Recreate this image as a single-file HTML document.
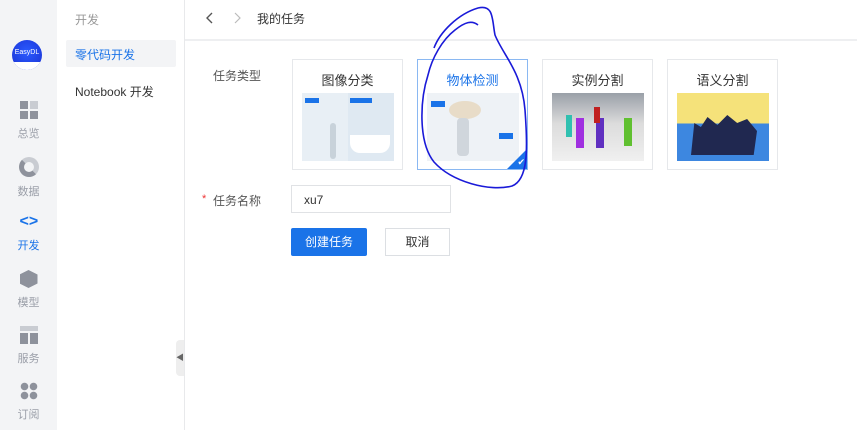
<!DOCTYPE html><html><head><meta charset="utf-8"><style>
body{margin:0;width:857px;height:430px;overflow:hidden;font-family:"Liberation Sans","Noto Sans CJK SC",sans-serif;background:#fff;position:relative;font-size:12px}
.a{position:absolute}
.rail{left:0;top:0;width:57px;height:430px;background:#f3f4f6}
.ri{width:57px;text-align:center;color:#9a9ea8;font-size:11px}
.ico{width:18px;height:18px;margin:0 auto 6px;}
.card{width:111px;height:111px;border:1px solid #e6e8eb;background:#fff;box-sizing:border-box}
.card .t{text-align:center;margin-top:10px;font-size:13px;color:#333}
.card .im{position:absolute;left:9px;top:33px;width:92px;height:68px}
</style></head><body>
<div class="a rail"></div>
<div class="a" style="left:12px;top:40px;width:30px;height:30px;border-radius:50%;background:radial-gradient(circle at 50% 40%,#2a5bff,#1a2fd0);overflow:hidden"><div style="color:#fff;font-size:7px;text-align:center;margin-top:9px">EasyDL</div><div style="position:absolute;bottom:0;width:30px;height:8px;background:#fff"></div></div>
<div class="a ri" style="top:101px"><div class="ico" style="background:linear-gradient(#8e929c,#8e929c) 0 0/8px 8px no-repeat,linear-gradient(#c9ccd2,#c9ccd2) 10px 0/8px 8px no-repeat,linear-gradient(#8e929c,#8e929c) 0 10px/8px 8px no-repeat,linear-gradient(#8e929c,#8e929c) 10px 10px/8px 8px no-repeat"></div>总览</div>
<div class="a ri" style="top:157px"><div class="ico" style="border-radius:50%;border:5px solid #8e929c;width:10px;height:10px;border-top-color:#c9ccd2;border-right-color:#c9ccd2"></div>数据</div>
<div class="a ri" style="top:213px;color:#1a73e8"><div class="ico" style="font-weight:bold;color:#1a73e8;font-size:16px;line-height:18px">&lt;&gt;</div>开发</div>
<div class="a ri" style="top:270px"><div class="ico" style="background:#8e929c;clip-path:polygon(50% 0,100% 25%,100% 75%,50% 100%,0 75%,0 25%)"></div>模型</div>
<div class="a ri" style="top:326px"><div class="ico" style="background:linear-gradient(#c9ccd2,#c9ccd2) 0 0/18px 5px no-repeat,linear-gradient(#8e929c,#8e929c) 0 7px/8px 11px no-repeat,linear-gradient(#8e929c,#8e929c) 10px 7px/8px 11px no-repeat"></div>服务</div>
<div class="a ri" style="top:382px"><div class="ico" style="background:radial-gradient(circle,#8e929c 3.5px,transparent 4px) 0 0/9px 9px"></div>订阅</div>
<div class="a" style="left:75px;top:11px;color:#999;font-size:12px">开发</div>
<div class="a" style="left:66px;top:40px;width:110px;height:27px;background:#f3f4f6;border-radius:2px"></div>
<div class="a" style="left:75px;top:46px;color:#1a73e8;font-size:12px">零代码开发</div>
<div class="a" style="left:75px;top:83px;color:#333;font-size:12px">Notebook 开发</div>
<div class="a" style="left:184px;top:0;width:1px;height:430px;background:#e8e9eb"></div>
<div class="a" style="left:176px;top:340px;width:8px;height:36px;background:#eee;border-radius:4px 0 0 4px;color:#666;font-size:8px;line-height:36px">◀</div>
<div class="a" style="left:185px;top:39px;width:672px;height:2px;background:#eeeff1"></div>
<svg class="a" style="left:203px;top:10px" width="50" height="16"><path d="M9 3 L4 8 L9 13" fill="none" stroke="#555" stroke-width="1.4"/><path d="M32 3 L37 8 L32 13" fill="none" stroke="#bbb" stroke-width="1.2"/></svg>
<div class="a" style="left:257px;top:10px;color:#333;font-size:12px">我的任务</div>
<div class="a" style="left:213px;top:67px;color:#555;font-size:12px">任务类型</div>
<div class="a card" style="left:292px;top:59px"><div class="t">图像分类</div><div class="im" style="background:linear-gradient(90deg,#e8eff5 50%,#dfe9f2 50%)"><div class="a" style="left:3px;top:5px;width:14px;height:5px;background:#1a73e8"></div><div class="a" style="left:48px;top:5px;width:22px;height:5px;background:#1a73e8"></div><div class="a" style="left:28px;top:30px;width:6px;height:36px;background:#c8d2da;border-radius:3px"></div><div class="a" style="left:48px;top:42px;width:40px;height:18px;background:#fff;border-radius:0 0 10px 10px"></div></div></div>
<div class="a card" style="left:417px;top:59px;border-color:#8ab8f2"><div class="t" style="color:#1a73e8">物体检测</div><div class="im" style="background:#eef2f6"><div class="a" style="left:22px;top:8px;width:32px;height:18px;background:#e8dcc8;border-radius:50%"></div><div class="a" style="left:30px;top:25px;width:12px;height:38px;background:#d0d6dc;border-radius:4px"></div><div class="a" style="left:4px;top:8px;width:14px;height:6px;background:#1a73e8"></div><div class="a" style="left:72px;top:40px;width:14px;height:6px;background:#1a73e8"></div></div><div class="a" style="right:0;bottom:0;width:0;height:0;border-left:20px solid transparent;border-bottom:20px solid #1a73e8"></div><div class="a" style="right:2px;bottom:1px;color:#fff;font-size:9px">✔</div></div>
<div class="a card" style="left:542px;top:59px"><div class="t">实例分割</div><div class="im" style="background:linear-gradient(#9aa0a8,#dcdcdc 45%,#f0f0f0)"><div class="a" style="left:24px;top:25px;width:8px;height:30px;background:#a030e0"></div><div class="a" style="left:44px;top:25px;width:8px;height:30px;background:#6030c0"></div><div class="a" style="left:72px;top:25px;width:8px;height:28px;background:#60c030"></div><div class="a" style="left:14px;top:22px;width:6px;height:22px;background:#30c0b0"></div><div class="a" style="left:42px;top:14px;width:6px;height:16px;background:#c02020"></div></div></div>
<div class="a card" style="left:667px;top:59px"><div class="t">语义分割</div><div class="im" style="background:linear-gradient(#f5e27a 45%,#3d87e0 45%)"><div class="a" style="left:14px;top:22px;width:66px;height:40px;background:#202850;clip-path:polygon(0 100%,5% 20%,15% 30%,25% 5%,40% 25%,55% 0,70% 20%,85% 10%,100% 40%,95% 100%)"></div></div></div>
<div class="a" style="left:202px;top:193px;color:#e33;font-size:11px">*</div>
<div class="a" style="left:213px;top:192px;color:#555;font-size:12px">任务名称</div>
<div class="a" style="left:291px;top:185px;width:160px;height:28px;border:1px solid #e0e2e5;box-sizing:border-box;padding:7px 12px;font-size:12px;color:#333">xu7</div>
<div class="a" style="left:291px;top:228px;width:76px;height:28px;background:#1a73e8;color:#fff;text-align:center;line-height:28px;font-size:12px;border-radius:2px">创建任务</div>
<div class="a" style="left:385px;top:228px;width:65px;height:28px;border:1px solid #dcdfe3;box-sizing:border-box;color:#333;text-align:center;line-height:26px;font-size:12px">取消</div>
<svg class="a" style="left:0;top:0" width="857" height="430"><path d="M434 48 C440 32 458 14 478 8 C494 4 492 20 495 35 C503 55 522 72 525 110 C528 150 528 180 512 186 C490 192 452 182 434 162 C418 142 420 100 428 75 C432 58 442 40 455 30 C465 22 472 20 478 25" fill="none" stroke="#1a1ad8" stroke-width="1.6"/></svg>
</body></html>
